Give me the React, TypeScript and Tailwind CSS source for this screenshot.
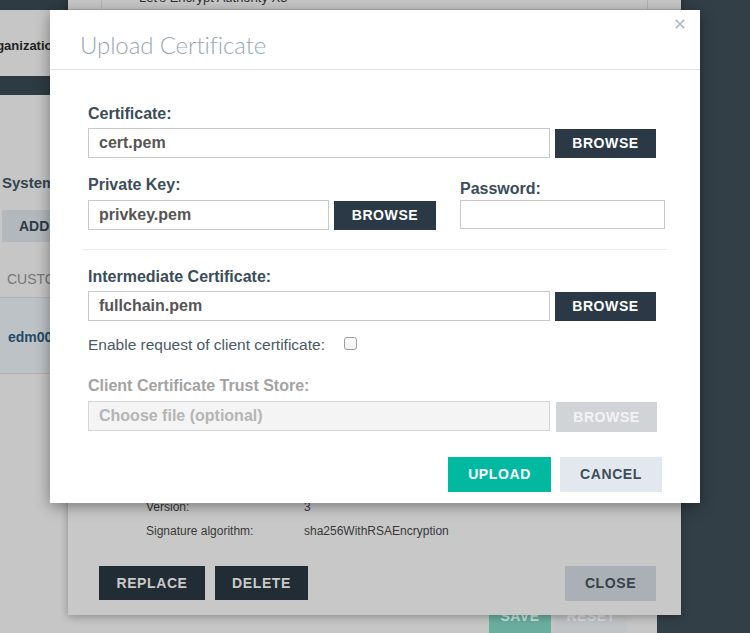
import React from "react";

function DarkBtn({ w, h, children, extra = "" }: { w: string; h: string; children: React.ReactNode; extra?: string }) {
  return (
    <div className={`flex shrink-0 items-center justify-center bg-[#2b3947] text-[14px] font-bold tracking-[0.6px] text-white ${w} ${h} ${extra}`}>
      {children}
    </div>
  );
}

function Field({ w, h, children, disabled = false }: { w: string; h: string; children?: React.ReactNode; disabled?: boolean }) {
  return (
    <div
      className={`flex shrink-0 items-center border pl-[10px] text-[16px] font-bold ${w} ${h} ${
        disabled ? "border-[#d6d6d6] bg-[#f4f4f4] text-[#b5b5b5]" : "border-[#c9c9c9] bg-white text-[#555555]"
      }`}
    >
      {children}
    </div>
  );
}

export default function App() {
  return (
    <div className="relative h-[633px] w-[750px] overflow-hidden bg-[#c6c6c6] font-['Liberation_Sans',Arial,sans-serif]">
      {/* underlying page (dimmed) */}
      <div className="flex h-full">
        <div className="flex flex-1 flex-col">
          <div className="h-[10px] bg-[#2e3b43]" />
          <div className="flex h-[66px] items-center overflow-hidden pt-[6px] text-[13px] font-bold text-[#1f1f1f]">
            <span className="-ml-[19px] whitespace-nowrap">Organization</span>
          </div>
          <div className="h-[19px] bg-[#2e3b43]" />
          <div className="mt-[78px] whitespace-nowrap pl-[2px] text-[15px] font-bold leading-5 text-[#34444f]">System Certificates</div>
          <div className="ml-[2px] mt-[17px] flex h-[32px] w-[90px] items-center bg-[#b3b8bc] pl-[17px] text-[14px] font-bold text-[#2c3a44]">
            ADD
          </div>
          <div className="mt-[27px] whitespace-nowrap pl-[7px] text-[14px] leading-5 text-[#767676]">CUSTOMER</div>
          <div className="mt-[8px] h-px bg-[#b2b2b2]" />
          <div className="flex h-[75px] items-center bg-[#bdc2c6] pl-[8px] pt-[3px] text-[14px] font-bold text-[#1f4b69]">
            edm001.example.com
          </div>
          <div className="h-px bg-[#b2b2b2]" />
          <div className="mt-auto flex justify-end gap-[4px] pr-[30px]">
            <div className="flex h-[33px] w-[62px] items-center justify-center bg-[#6aad9f] text-[14px] font-bold tracking-[0.5px] text-[#c8e4de]">
              SAVE
            </div>
            <div className="flex h-[33px] w-[72px] items-center justify-center bg-[#c0c3c6] text-[14px] font-bold tracking-[0.5px] text-[#d9dbdd]">
              RESET
            </div>
          </div>
        </div>
        <div className="w-[93px] bg-[#333f47]" />
      </div>

      {/* first dialog (dimmed, behind) */}
      <div className="absolute left-[68px] top-[-20px] flex h-[635px] w-[613px] flex-col bg-[#c8c8c8] shadow-[0_2px_8px_rgba(0,0,0,0.3)]">
        <div className="flex h-[30px] border-b border-[#b4b4b4]">
          <div className="w-[34px] border-r border-[#b4b4b4]" />
          <div className="flex w-[546px] items-center border-r border-[#b4b4b4] pl-[37px] pt-[6px] text-[13px] text-[#2e2e2e]">
            Let's Encrypt Authority X3
          </div>
          <div className="flex-1" />
        </div>
        <div className="flex-1" />
        <div className="grid grid-cols-[158px_1fr] pl-[78px] text-[12px] leading-[24px] text-[#383838]">
          <div>Version:</div>
          <div>3</div>
          <div>Signature algorithm:</div>
          <div>sha256WithRSAEncryption</div>
        </div>
        <div className="mt-[23px] flex items-start pb-[14px] pl-[31px] pr-[25px]">
          <div className="flex h-[34px] w-[106px] items-center justify-center bg-[#212c35] text-[14px] font-bold tracking-[0.6px] text-[#c9c9c9]">
            REPLACE
          </div>
          <div className="ml-[10px] flex h-[34px] w-[93px] items-center justify-center bg-[#212c35] text-[14px] font-bold tracking-[0.6px] text-[#c9c9c9]">
            DELETE
          </div>
          <div className="ml-auto flex h-[35px] w-[91px] items-center justify-center bg-[#aab0b5] text-[14px] font-bold tracking-[0.6px] text-[#37434c]">
            CLOSE
          </div>
        </div>
      </div>

      {/* Upload Certificate modal */}
      <div className="absolute left-[50px] top-[10px] h-[493px] w-[650px] bg-white shadow-[0_3px_14px_rgba(0,0,0,0.4)]">
        <div className="h-[60px] border-b border-[#e3e3e3] pl-[30px] pt-[21px]">
          <div className="font-['Lato',sans-serif] text-[24px] font-light leading-[28px] tracking-[-0.1px] text-[#97a8b1]">Upload Certificate</div>
        </div>
        <svg className="absolute right-[15px] top-[9px]" width="10" height="10" viewBox="0 0 10 10">
          <path d="M0.8 0.8 L9.2 9.2 M9.2 0.8 L0.8 9.2" stroke="#a8b5bc" strokeWidth="1.6" fill="none" />
        </svg>

        <div className="pl-[38px] pr-[35px] pt-[34px]">
          <div className="mb-[4px] text-[16px] font-bold leading-5 text-[#3b4d5a]">Certificate:</div>
          <div className="flex items-end gap-[5px]">
            <Field w="w-[462px]" h="h-[30px]">cert.pem</Field>
            <DarkBtn w="w-[101px]" h="h-[29px]">BROWSE</DarkBtn>
          </div>

          <div className="mt-[17px] flex">
            <div>
              <div className="mb-[5px] text-[16px] font-bold leading-5 text-[#3b4d5a]">Private Key:</div>
              <div className="flex items-end gap-[5px]">
                <Field w="w-[241px]" h="h-[30px]">privkey.pem</Field>
                <DarkBtn w="w-[102px]" h="h-[29px]">BROWSE</DarkBtn>
              </div>
            </div>
            <div className="ml-[24px]">
              <div className="mb-px mt-[4px] text-[16px] font-bold leading-5 text-[#3b4d5a]">Password:</div>
              <Field w="w-[205px]" h="h-[29px]" />
            </div>
          </div>

          <div className="-ml-[6px] -mr-[2px] mt-[19px] h-px bg-[#ececec]" />

          <div className="mb-[4px] mt-[17px] text-[16px] font-bold leading-5 text-[#3b4d5a]">Intermediate Certificate:</div>
          <div className="flex items-end gap-[5px]">
            <Field w="w-[462px]" h="h-[30px]">fullchain.pem</Field>
            <DarkBtn w="w-[101px]" h="h-[29px]">BROWSE</DarkBtn>
          </div>

          <div className="mt-[14px] flex h-5 items-center">
            <span className="text-[15.5px] leading-5 text-[#4a5964]">Enable request of client certificate:</span>
            <div className="-mt-[3px] ml-[19px] h-[13px] w-[13px] rounded-[3px] border border-[#9c9c9c] bg-gradient-to-b from-white to-[#f1f1f1]" />
          </div>

          <div className="mb-[5px] mt-[21px] text-[16px] font-bold leading-5 text-[#a3a3a3]">Client Certificate Trust Store:</div>
          <div className="flex items-start gap-[6px]">
            <Field w="w-[462px]" h="h-[30px]" disabled>
              Choose file (optional)
            </Field>
            <div className="mt-px flex h-[30px] w-[101px] items-center justify-center bg-[#d1d4d7] text-[14px] font-bold tracking-[0.6px] text-[#f2f3f4]">
              BROWSE
            </div>
          </div>

          <div className="mr-[3px] mt-[25px] flex justify-end gap-[9px]">
            <div className="flex h-[35px] w-[103px] items-center justify-center bg-[#00b9a0] text-[14px] font-bold tracking-[0.6px] text-white">
              UPLOAD
            </div>
            <div className="flex h-[35px] w-[102px] items-center justify-center bg-[#e3e8ee] text-[14px] font-bold tracking-[0.6px] text-[#3e4d57]">
              CANCEL
            </div>
          </div>
        </div>
      </div>
    </div>
  );
}
